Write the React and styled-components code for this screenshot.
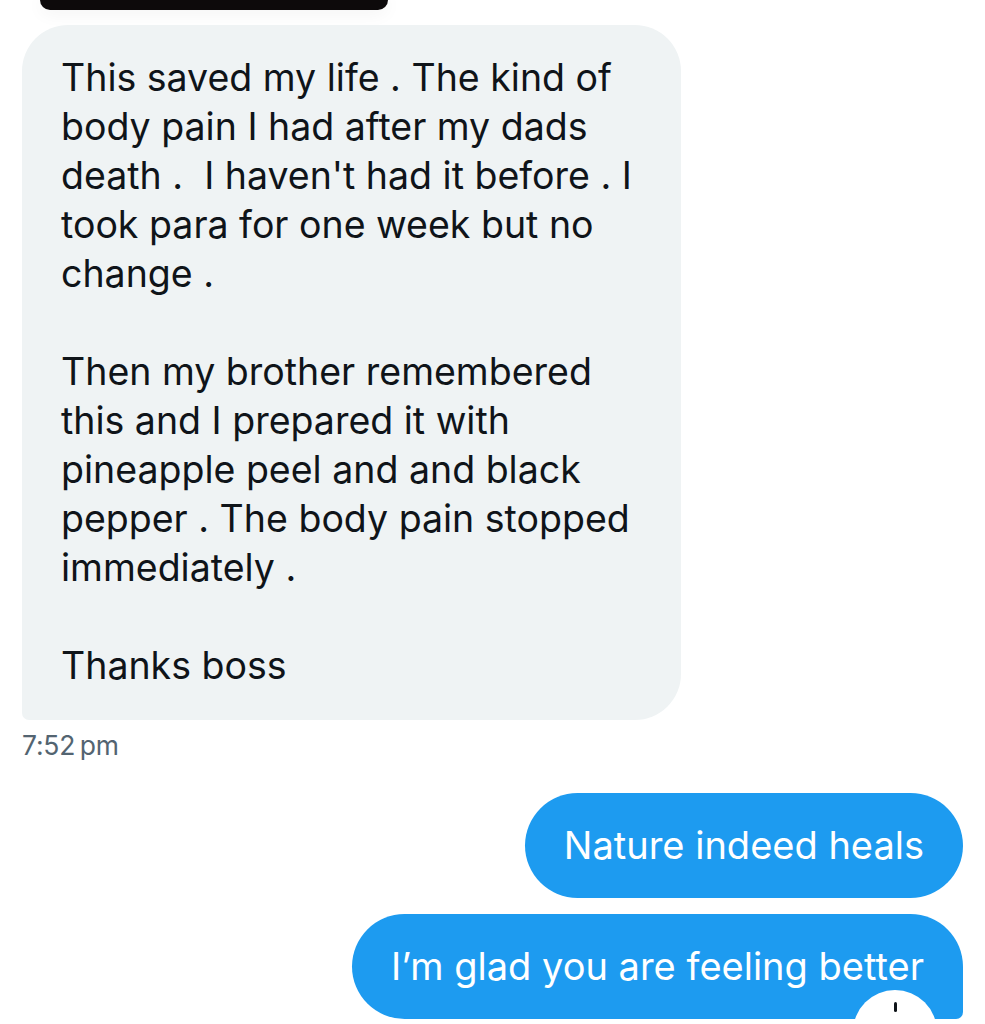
import React from "react";
import styled, { createGlobalStyle } from "styled-components";

const Global = createGlobalStyle`
  html, body { margin: 0; padding: 0; background: #ffffff; }
  body { font-family: Inter, Roboto, "Noto Sans", "Liberation Sans", sans-serif; overflow: hidden; }
`;

const Page = styled.div`
  width: 985px;
  height: 1024px;
  overflow: hidden;
  display: flex;
  flex-direction: column;
  padding: 0 22px;
  box-sizing: border-box;
`;

const MediaEdge = styled.div`
  width: 348px;
  height: 10px;
  margin-left: 18px;
  background: #0d0a0b;
  border-radius: 0 0 22px 22px;
  box-shadow: 0 2px 18px rgba(0, 0, 0, 0.07);
`;

const Received = styled.div`
  margin-top: 15px;
  width: 659px;
  box-sizing: border-box;
  padding: 28px 20px 30px 39px;
  background: #eff3f4;
  border-radius: 46px 46px 46px 7px;
  color: #0f1419;
  font-size: 37.5px;
  line-height: 49px;
  letter-spacing: 0;
`;

const Line = styled.span`
  display: block;
  white-space: pre;
  min-height: 49px;
`;

const Time = styled.div`
  margin-top: 10px;
  height: 30px;
  line-height: 30px;
  font-size: 26.5px;
  color: #536471;
  letter-spacing: -0.2px;
`;

const SentGroup = styled.div`
  margin-top: 33px;
  display: flex;
  flex-direction: column;
  align-items: flex-end;
  gap: 16px;
`;

const Sent = styled.div`
  position: relative;
  box-sizing: border-box;
  height: 105px;
  padding: 28px 39px;
  background: #1d9bf0;
  color: #ffffff;
  font-size: 38px;
  line-height: 49px;
  letter-spacing: 0;
  white-space: nowrap;
  border-radius: ${(p) => (p.$last ? "53px 53px 7px 53px" : "53px")};
`;

const Reaction = styled.div`
  position: absolute;
  right: 26px;
  top: 76px;
  width: 84px;
  height: 84px;
  border-radius: 50%;
  background: #ffffff;
  display: flex;
  justify-content: center;
`;

const Stroke = styled.div`
  margin-top: 12px;
  width: 3px;
  height: 10px;
  border-radius: 2px;
  background: #0f1419;
`;

const lines = [
  "This saved my life . The kind of",
  "body pain I had after my dads",
  "death .  I haven't had it before . I",
  "took para for one week but no",
  "change .",
  "",
  "Then my brother remembered",
  "this and I prepared it with",
  "pineapple peel and and black",
  "pepper . The body pain stopped",
  "immediately .",
  "",
  "Thanks boss",
];

export default function App() {
  return (
    <>
      <Global />
      <Page>
        <MediaEdge />
        <Received>
          {lines.map((l, i) => (
            <Line key={i}>{l}</Line>
          ))}
        </Received>
        <Time>7:52{"\u2009"}pm</Time>
        <SentGroup>
          <Sent>Nature indeed heals</Sent>
          <Sent $last>
            I’m glad you are feeling better
            <Reaction>
              <Stroke />
            </Reaction>
          </Sent>
        </SentGroup>
      </Page>
    </>
  );
}
